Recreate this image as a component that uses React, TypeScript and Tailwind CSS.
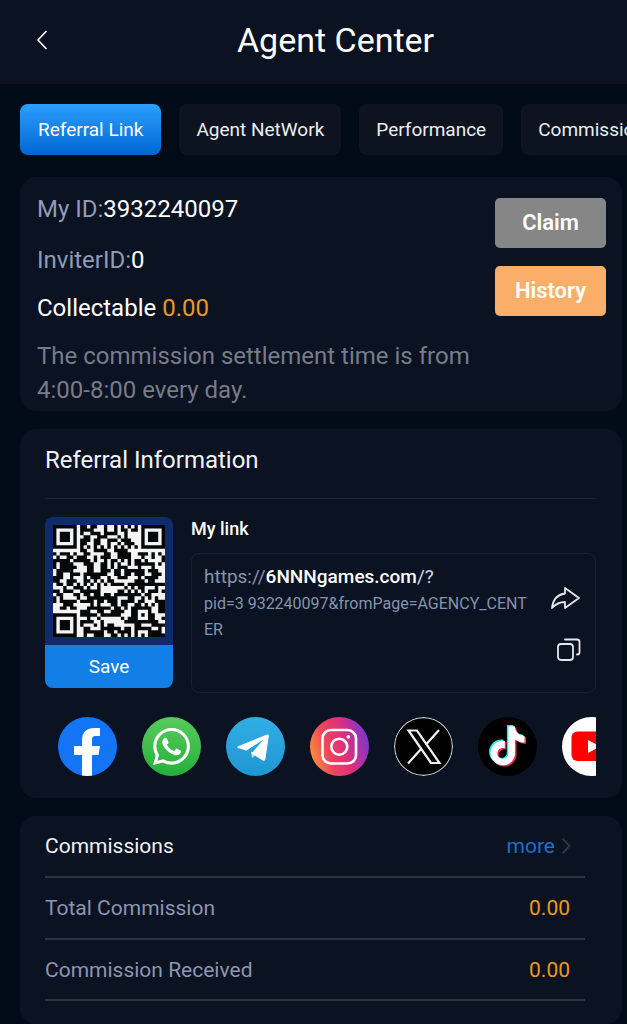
import React, { ReactNode } from "react";
import { SiWhatsapp } from "react-icons/si";

const QR_SIZE = 33;

// Finder squares sit in three corners, the small alignment mark near the fourth
const isDark = (x: number, y: number): boolean => {
  const finders = [
    [3, 3],
    [QR_SIZE - 4, 3],
    [3, QR_SIZE - 4],
  ];
  for (const [cx, cy] of finders) {
    const d = Math.max(Math.abs(x - cx), Math.abs(y - cy));
    if (d <= 4) return d !== 4 && d !== 2;
  }
  const a = Math.max(Math.abs(x - 26), Math.abs(y - 26));
  if (a <= 2) return a !== 1;
  if (x === 6 || y === 6) return (x + y) % 2 === 0;
  let h = (x * 374761393 + y * 668265263) | 0;
  h = Math.imul(h ^ (h >>> 13), 1274126177);
  return ((h ^ (h >>> 16)) >>> 0) % 100 < 54;
};

const qrPath = Array.from({ length: QR_SIZE * QR_SIZE }, (_, i) => [i % QR_SIZE, Math.floor(i / QR_SIZE)])
  .filter(([x, y]) => isDark(x, y))
  .map(([x, y]) => `M${x} ${y}h1v1h-1z`)
  .join("");

const QrCode: React.FC = () => (
  <svg viewBox="0 0 33 33" className="block w-full" role="img" aria-label="Referral QR code">
    <rect width="33" height="33" fill="#f4f4f4" />
    <path d={qrPath} fill="#060708" />
  </svg>
);

const TIKTOK_NOTE =
  "M12.525.02c1.31-.02 2.61-.01 3.91-.02.08 1.53.63 3.09 1.75 4.17 1.12 1.11 2.7 1.62 4.24 1.79v4.03c-1.44-.05-2.89-.35-4.2-.97-.57-.26-1.1-.59-1.62-.93-.01 2.92.01 5.84-.02 8.75-.08 1.4-.54 2.79-1.35 3.94-1.31 1.92-3.58 3.17-5.91 3.21-1.43.08-2.86-.31-4.08-1.03-2.02-1.19-3.44-3.37-3.65-5.71-.02-.5-.03-1-.01-1.49.18-1.9 1.12-3.72 2.58-4.96 1.66-1.44 3.98-2.13 6.15-1.72.02 1.48-.04 2.96-.04 4.44-.99-.32-2.15-.23-3.02.37-.63.41-1.11 1.04-1.36 1.75-.21.51-.15 1.07-.14 1.61.24 1.64 1.82 3.02 3.5 2.87 1.12-.01 2.19-.66 2.77-1.61.19-.33.4-.67.41-1.06.1-1.79.06-3.57.07-5.36.01-4.03-.01-8.05.02-12.07z";

interface Social {
  name: string;
  circle: string;
  icon: ReactNode;
}

const socials: Social[] = [
  {
    name: "Facebook",
    circle: "bg-[#1375f5]",
    icon: <path d="M24 60V38h-8v-9h8v-6c0-8 5-12 12-12h6v8h-4c-3 0-4 1-4 4v6h8l-1.5 9H34v22z" fill="#fff" />,
  },
  {
    name: "WhatsApp",
    circle: "bg-linear-to-b from-[#56cb5c] to-[#22b03a]",
    icon: <SiWhatsapp x="11" y="11" size={37} color="#fff" />,
  },
  {
    name: "Telegram",
    circle: "bg-linear-to-b from-[#33aee4] to-[#1d96d4]",
    icon: (
      <>
        <path d="M25 34.5l1 6.5 5-4z" fill="#bfe0f2" />
        <path
          d="M12.2 29.2L41 17.6c1.3-.5 2 .2 1.8 1.5L39.4 42c-.3 1.9-1.5 2.3-3 1.3L25.5 36.5 37.5 22.5 20.5 33.5l-8.1-2.2c-1.5-.4-1.5-1.5-.2-2.1z"
          fill="#fff"
        />
      </>
    ),
  },
  {
    name: "Instagram",
    circle: "bg-linear-[75deg,#fb9a3a_5%,#f0455c_32%,#dd2f7b_58%,#7a36d2_92%]",
    icon: (
      <g fill="none" stroke="#fff" strokeWidth="2.6">
        <rect x="12.5" y="13" width="33.5" height="33.5" rx="8.5" />
        <circle cx="29.3" cy="29.7" r="8" />
        <circle cx="38.3" cy="19.8" r="1.9" fill="#fff" stroke="none" />
      </g>
    ),
  },
  {
    name: "X",
    circle: "bg-black",
    icon: (
      <g fill="none" stroke="#f2f2f2" strokeWidth="2.2">
        <circle cx="29.5" cy="29.5" r="28.9" stroke="#c9cdd3" strokeWidth="1.2" />
        <path d="M14.5 13.5H23L45.5 46H37zM45 13L32 27.5M14 46.5L27.5 31.5" />
      </g>
    ),
  },
  {
    name: "TikTok",
    circle: "bg-black",
    icon: (
      <>
        <path d={TIKTOK_NOTE} transform="translate(8.5 8) scale(1.63)" fill="#25e6e0" />
        <path d={TIKTOK_NOTE} transform="translate(11.5 10.5) scale(1.63)" fill="#f7275a" />
        <path d={TIKTOK_NOTE} transform="translate(10 9.2) scale(1.63)" fill="#fff" />
      </>
    ),
  },
  {
    name: "YouTube",
    circle: "bg-white",
    icon: (
      <>
        <rect x="9.5" y="14.5" width="40" height="29.5" rx="6" fill="#fe0000" />
        <path d="M26 23l12 6.5L26 36z" fill="#fff" />
      </>
    ),
  },
];

const tabs = ["Referral Link", "Agent NetWork", "Performance", "Commission"];

const commissions = [
  { label: "Total Commission", value: "0.00" },
  { label: "Commission Received", value: "0.00" },
];

const Card: React.FC<{ className: string; children: ReactNode }> = ({ className, children }) => (
  <section className={`rounded-2xl bg-[#0b1222] ${className}`}>{children}</section>
);

const Header: React.FC = () => (
  <header className="grid h-[84px] grid-cols-[84px_1fr_40px] items-center bg-[#0b1222] pb-1">
    <button aria-label="Back" className="flex h-full items-center justify-center">
      <svg width="12" height="20" viewBox="0 0 12 20" fill="none" stroke="#fff" strokeWidth="1.6">
        <path d="M10.5 1L2 10l8.5 9" />
      </svg>
    </button>
    <h1 className="text-center text-[34px] leading-10 text-white">Agent Center</h1>
  </header>
);

const Tabs: React.FC = () => (
  <nav className="flex gap-[18px] overflow-hidden pt-5 pl-5">
    {tabs.map((tab, i) => (
      <button
        key={tab}
        className={`h-[51px] shrink-0 rounded-lg text-[19px] leading-6 ${
          i === 0 ? "bg-linear-to-b from-[#2c9ffc] to-[#0065d2] px-[18px] text-white" : "bg-[#0d1420] px-[17px] text-[#eceef2]"
        }`}
      >
        {tab}
      </button>
    ))}
  </nav>
);

const Summary: React.FC = () => (
  <Card className="flex justify-between pt-[15px] pr-4 pb-1 pl-[17px]">
    <div className="text-2xl leading-[34px] text-[#8f9bb9]">
      <p>
        My ID:<span className="text-white">3932240097</span>
      </p>
      <p className="mt-[17px]">
        InviterID:<span className="text-white">0</span>
      </p>
      <p className="mt-[14px] text-white">
        Collectable <span className="text-[#eb9a1b]">0.00</span>
      </p>
      <p className="mt-[14px] max-w-[440px] text-[#767d89]">The commission settlement time is from 4:00-8:00 every day.</p>
    </div>
    <div className="flex w-[111px] shrink-0 flex-col gap-[18px] pt-[6px] text-[22px] leading-7 font-semibold text-white">
      <button className="h-[50px] rounded-[5px] bg-[#868686]">Claim</button>
      <button className="h-[50px] rounded-[5px] bg-[#fbae68]">History</button>
    </div>
  </Card>
);

const ReferralInfo: React.FC = () => (
  <Card className="pt-3 pr-[26px] pb-[22px] pl-[25px]">
    <h2 className="border-b border-[#182234] pt-[3px] pb-[22px] text-2xl leading-8 text-[#f2f3f6]">Referral Information</h2>

    <div className="mt-[18px] flex items-start gap-[18px]">
      <div className="flex w-32 shrink-0 flex-col overflow-hidden rounded-lg bg-[#0f2b69]">
        <div className="p-2">
          <QrCode />
        </div>
        <button className="h-[43px] bg-[#117fe6] text-[19px] leading-6 text-white">Save</button>
      </div>

      <div className="flex min-w-0 flex-1 flex-col">
        <h3 className="text-lg leading-6 font-medium text-white">My link</h3>
        <div className="mt-3 flex h-[140px] justify-between rounded-lg border border-[#15203a] pt-2.5 pr-3.5 pl-3">
          <p className="max-w-[330px] text-base leading-[26px] break-all text-[#8693b0]">
            <span className="text-[19px]">
              https://<span className="font-medium text-white">6NNNgames.com</span>
              <span className="text-[#d4dae6]">/?</span>
            </span>
            <br />
            pid=3 932240097&amp;fromPage=AGENCY_CENTER
          </p>
          <div className="flex shrink-0 flex-col items-end gap-7 pt-[22px]">
            <button aria-label="Share link">
              <svg width="32" height="24" viewBox="0 0 32 24" fill="none" stroke="#e4e7ec" strokeWidth="1.8" strokeLinejoin="round">
                <path d="M16 2l14 10-14 10v-6q-7.500 0-13 6Q4.500 9 16 7.500z" />
              </svg>
            </button>
            <button aria-label="Copy link">
              <svg width="24" height="24" viewBox="0 0 24 24" fill="none" stroke="#e4e7ec" strokeWidth="1.8" strokeLinecap="round">
                <rect x="1" y="6" width="15" height="16" rx="3" />
                <path d="M8 1.500h12q2.500 0 2.500 2.500v10.500q0 2-2.500 2" />
              </svg>
            </button>
          </div>
        </div>
      </div>
    </div>

    <ul className="mt-6 flex gap-[25px] overflow-hidden pl-[13px]">
      {socials.map((social) => (
        <li key={social.name} className="shrink-0">
          <a href="#" aria-label={social.name} className={`block size-[59px] overflow-hidden rounded-full ${social.circle}`}>
            <svg viewBox="0 0 59 59" className="block size-full">
              {social.icon}
            </svg>
          </a>
        </li>
      ))}
    </ul>
  </Card>
);

const Commissions: React.FC = () => (
  <Card className="pr-[37px] pb-[23px] pl-[25px]">
    <div className="flex h-[62px] items-center justify-between border-b-2 border-[#2d343c] pr-[14px]">
      <h2 className="text-[21px] leading-7 text-[#f2f3f6]">Commissions</h2>
      <a href="#" className="flex items-center gap-1.5 text-[21px] leading-7 text-[#1673cc]">
        more
        <svg width="10" height="18" viewBox="0 0 10 18" fill="none" stroke="#2b3443" strokeWidth="2">
          <path d="M1.5 1.5L8.5 9l-7 7.5" />
        </svg>
      </a>
    </div>
    <table className="w-full text-[21px] leading-7">
      <tbody>
        {commissions.map((row) => (
          <tr key={row.label} className="h-[61px] border-b-2 border-[#2d343c]">
            <th scope="row" className="text-left font-normal text-[#8b96b0]">
              {row.label}
            </th>
            <td className="pr-[15px] text-right text-[#eb9a1b]">{row.value}</td>
          </tr>
        ))}
      </tbody>
    </table>
  </Card>
);

export default function App() {
  return (
    <div className="min-h-screen bg-[#020c19] font-[Roboto,sans-serif]">
      <Header />
      <Tabs />
      <main className="flex flex-col gap-[18px] pt-[22px] pr-[5px] pl-5">
        <Summary />
        <ReferralInfo />
        <Commissions />
      </main>
    </div>
  );
}
